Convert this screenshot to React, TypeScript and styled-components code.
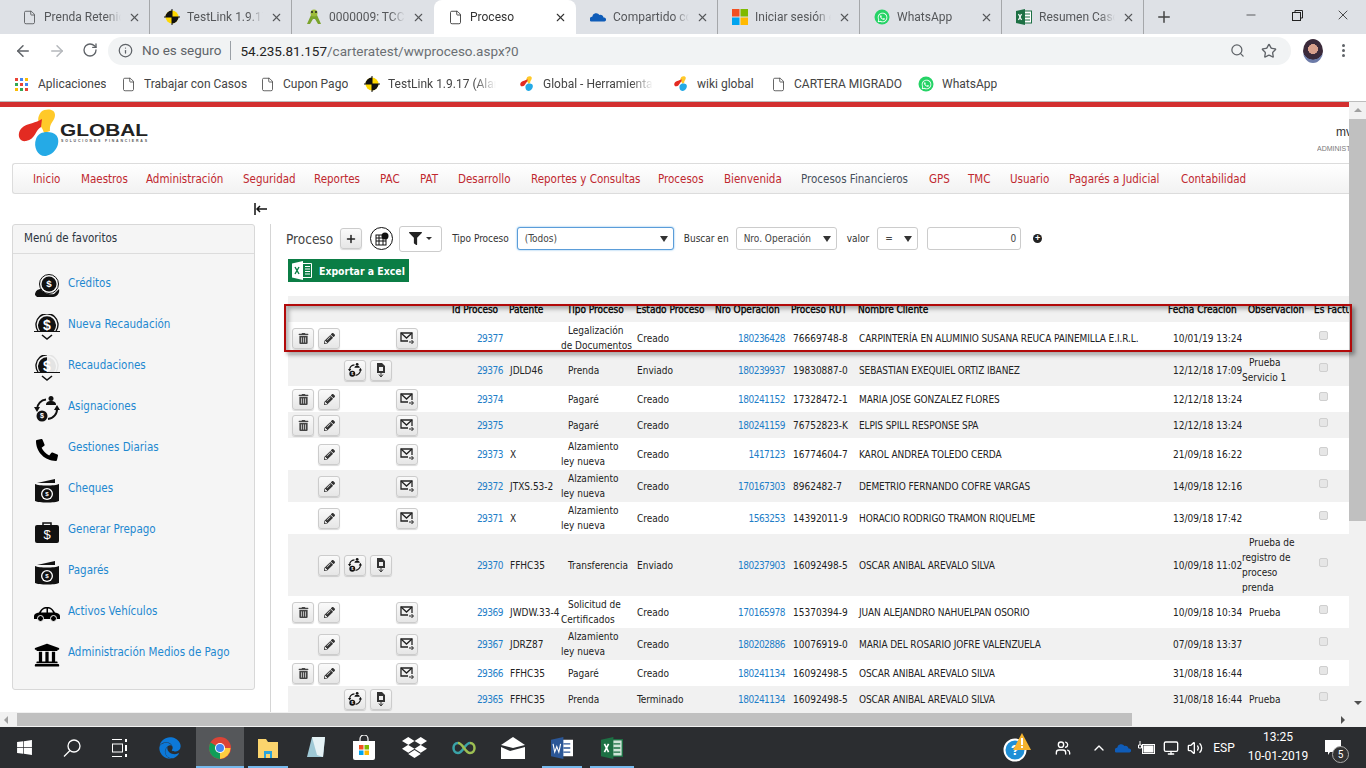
import React from 'react';
import styled, { createGlobalStyle } from 'styled-components';
import { FaWhatsapp, FaWindows, FaDropbox, FaEdge, FaPhoneAlt, FaUniversity, FaTrashAlt, FaPencilAlt, FaFilter } from 'react-icons/fa';
import { File, ArrowLeft, ArrowRight, RotateCw, Info, Search, Star, Plus, X, Minus, ChevronUp, Volume2, Monitor, Users } from 'lucide-react';

const GlobalStyle = createGlobalStyle`
  html, body { margin: 0; padding: 0; height: 100%; overflow: hidden; background: #fff; }
  * { box-sizing: border-box; }
`;

const chromeFont = 'Roboto, "Liberation Sans", sans-serif';
const pageFont = '"DejaVu Sans Condensed", "DejaVu Sans", sans-serif';

const Screen = styled.div`
  position: relative;
  width: 1366px;
  height: 768px;
  display: flex;
  flex-direction: column;
  overflow: hidden;
  font-family: ${pageFont};
`;

/* ---- browser chrome ---- */
const TabBar = styled.div`
  height: 34px;
  background: #dee1e6;
  display: flex;
  align-items: stretch;
  padding-left: 8px;
  font: 12px ${chromeFont};
  color: #45474a;
  flex: none;
`;

const Tab = styled.div<{ $active?: boolean; $sep?: boolean }>`
  width: 142px;
  display: flex;
  align-items: center;
  padding: 0 8px 0 14px;
  gap: 7px;
  background: ${(p) => (p.$active ? '#fff' : 'transparent')};
  border-radius: ${(p) => (p.$active ? '8px 8px 0 0' : '0')};
  color: ${(p) => (p.$active ? '#333' : '#55575a')};
  border-right: ${(p) => (p.$sep ? '1px solid #a5a7aa' : '1px solid transparent')};
`;

const TabTitle = styled.span`
  flex: 1;
  overflow: hidden;
  white-space: nowrap;
  mask-image: linear-gradient(90deg, #000 80%, transparent);
`;

const NewTab = styled.div`
  width: 40px;
  display: flex;
  align-items: center;
  justify-content: center;
  color: #444;
`;

const WindowButtons = styled.div`
  margin-left: auto;
  display: flex;
  align-items: flex-start;
  color: #222;
`;

const WindowButton = styled.div`
  width: 46px;
  height: 30px;
  display: flex;
  align-items: center;
  justify-content: center;
`;

const Toolbar = styled.div`
  height: 33px;
  background: #fff;
  display: flex;
  align-items: center;
  padding: 0 0 0 14px;
  flex: none;
  color: #5f6368;
`;

const NavArrows = styled.div`
  display: flex;
  gap: 16px;
  width: 94px;
`;

const Omnibox = styled.div`
  width: 1183px;
  height: 28px;
  background: #f1f3f4;
  border-radius: 14px;
  display: flex;
  align-items: center;
  padding: 0 10px;
  font: 13.5px ${chromeFont};
  color: #5f6368;
`;

const Insecure = styled.span`
  margin-left: 9px;
  padding-right: 9px;
  border-right: 1px solid #9aa0a6;
  line-height: 19px;
`;

const Url = styled.span`
  margin-left: 9px;
  color: #6b6f73;
  b { font-weight: 400; color: #222; }
`;

const OmniIcons = styled.div`
  margin-left: auto;
  display: flex;
  gap: 16px;
  margin-right: 4px;
`;

const Avatar = styled.div`
  width: 20px;
  height: 24px;
  border-radius: 50%;
  background: radial-gradient(circle at 50% 42%, #d9a08c 0 28%, #3b2a3a 30% 60%, #6c7ba8 62%);
  margin-left: 12px;
`;

const MenuDots = styled.div`
  margin-left: 19px;
  display: flex;
  flex-direction: column;
  gap: 2px;
`;

const MenuDot = styled.span`
  width: 3px;
  height: 3px;
  border-radius: 50%;
  background: #5f6368;
`;

const Bookmarks = styled.div`
  height: 35px;
  background: #fff;
  display: flex;
  align-items: center;
  padding-left: 15px;
  font: 12px ${chromeFont};
  color: #444;
  flex: none;
  border-bottom: 1px solid #bdbdbd;
`;

const Bookmark = styled.div<{ $w: number }>`
  width: ${(p) => p.$w}px;
  display: flex;
  align-items: center;
  gap: 8px;
  white-space: nowrap;
  overflow: hidden;
`;

const BookmarkTitle = styled.span<{ $max?: number }>`
  overflow: hidden;
  max-width: ${(p) => (p.$max ? `${p.$max}px` : 'none')};
  mask-image: ${(p) => (p.$max ? 'linear-gradient(90deg, #000 80%, transparent)' : 'none')};
`;

/* ---- page viewport ---- */
const Viewport = styled.div`
  flex: none;
  height: 625px;
  display: grid;
  grid-template-columns: 1349px 17px;
  grid-template-rows: 610px 15px;
`;

const Page = styled.div`
  overflow: hidden;
  background: #fff;
  border-top: 5px solid #d32f2f;
  display: flex;
  flex-direction: column;
  color: #222;
  font-size: 10.5px;
`;

const HeaderRow = styled.div`
  height: 56px;
  flex: none;
  display: flex;
  justify-content: space-between;
  padding-left: 18px;
`;

const UserBox = styled.div`
  width: 60px;
  padding-top: 18px;
  font-family: "Liberation Sans", sans-serif;
`;

const UserName = styled.div`
  font-size: 12px;
  color: #333;
  width: 13px;
  margin-left: auto;
  overflow: hidden;
  white-space: nowrap;
`;

const UserRole = styled.div`
  font-size: 7px;
  color: #7a7a7a;
  margin-top: 6px;
  width: 32px;
  margin-left: auto;
  overflow: hidden;
  white-space: nowrap;
`;

const MainNav = styled.nav`
  margin-left: 12px;
  height: 31px;
  flex: none;
  background: linear-gradient(#fff, #f2f2f2);
  border: 1px solid #dcdcdc;
  border-right: none;
  border-radius: 3px 0 0 3px;
  display: flex;
  align-items: center;
  padding-left: 20px;
  gap: 20px;
  white-space: nowrap;
`;

const NavLink = styled.a<{ $dark?: boolean; $w: number }>`
  width: ${(p) => p.$w}px;
  flex: none;
  color: ${(p) => (p.$dark ? '#46505c' : '#c0282f')};
  font-size: 11.5px;
`;

const Collapse = styled.div`
  height: 30px;
  flex: none;
  display: flex;
  align-items: center;
  padding-left: 254px;
  color: #111;
`;

const Body = styled.div`
  flex: 1;
  min-height: 0;
  display: flex;
  align-items: stretch;
`;

const SideColumn = styled.aside`
  width: 270px;
  flex: none;
  padding-left: 12px;
`;

const FavPanel = styled.section`
  width: 243px;
  height: 466px;
  background: #f5f5f5;
  border: 1px solid #d8d8d8;
  border-radius: 3px;
`;

const FavTitle = styled.div`
  height: 29px;
  line-height: 27px;
  padding-left: 11px;
  border-bottom: 1px solid #dcdcdc;
  font-size: 11.5px;
  color: #2b3440;
`;

const FavList = styled.div`
  padding-top: 15px;
  padding-left: 21px;
`;

const FavItem = styled.a`
  height: 41px;
  display: flex;
  gap: 8px;
  color: #1e88d0;
  font-size: 11.5px;
`;

const FavIcon = styled.div`
  width: 26px;
  height: 28px;
  flex: none;
  display: flex;
  align-items: center;
  justify-content: center;
  color: #000;
  margin-top: 3px;
`;

const FavLabel = styled.span`
  padding-top: 7px;
`;

const Content = styled.main`
  flex: 1;
  min-width: 0;
  border-left: 1px solid #d5d5d5;
  padding-left: 15px;
  overflow: hidden;
`;

const FilterBar = styled.div`
  height: 29px;
  display: flex;
  align-items: center;
  white-space: nowrap;
`;

const PageTitle = styled.h1`
  margin: 0 7px 0 0;
  font-size: 13.5px;
  font-weight: 400;
  color: #444;
`;

const RoundBtn = styled.div`
  width: 23px;
  height: 23px;
  margin-left: 8px;
  border: 1.5px solid #111;
  border-radius: 50%;
  display: flex;
  align-items: center;
  justify-content: center;
`;

const IconBtn = styled.div`
  width: 22px;
  height: 21px;
  background: linear-gradient(#fafafa, #e6e6e6);
  border: 1px solid #ccc;
  border-radius: 3px;
  box-shadow: 0 1px 1px rgba(0, 0, 0, 0.15);
  display: flex;
  align-items: center;
  justify-content: center;
  color: #222;
  flex: none;
`;

const FilterBtn = styled.div`
  width: 43px;
  height: 26px;
  margin-left: 6px;
  border: 1px solid #ccc;
  border-radius: 3px;
  background: #fff;
  display: flex;
  align-items: center;
  justify-content: center;
  gap: 4px;
`;

const Caret = styled.span`
  border-left: 3px solid transparent;
  border-right: 3px solid transparent;
  border-top: 3px solid #333;
`;

const FieldLabel = styled.span<{ $ml: number }>`
  margin-left: ${(p) => p.$ml}px;
  font-size: 10px;
  color: #333;
`;

const SelectBox = styled.div<{ $w: number; $ml: number; $focus?: boolean }>`
  width: ${(p) => p.$w}px;
  height: 23px;
  margin-left: ${(p) => p.$ml}px;
  border: 1px solid ${(p) => (p.$focus ? '#5b9dd9' : '#ccc')};
  box-shadow: ${(p) => (p.$focus ? '0 0 2px #66afe9' : 'none')};
  border-radius: 3px;
  background: #fff;
  display: flex;
  align-items: center;
  justify-content: space-between;
  padding: 0 5px 0 7px;
  font-size: 10px;
  color: #444;
`;

const SelectArrow = styled.span`
  border-left: 4px solid transparent;
  border-right: 4px solid transparent;
  border-top: 6px solid #333;
`;

const NumberBox = styled.div`
  width: 94px;
  height: 23px;
  margin-left: 9px;
  border: 1px solid #ccc;
  border-radius: 3px;
  text-align: right;
  padding-right: 4px;
  line-height: 21px;
  font-size: 10px;
  color: #444;
`;

const AddDot = styled.span`
  width: 9px;
  height: 9px;
  margin-left: 12px;
  border-radius: 50%;
  background: #222;
  color: #fff;
  font: bold 9px/9px "Liberation Sans", sans-serif;
  text-align: center;
`;

const ExcelBtn = styled.div`
  margin: 6px 0 0 2px;
  width: 121px;
  height: 23px;
  background: #0b7d45;
  color: #fff;
  display: flex;
  align-items: center;
  padding-left: 4px;
  gap: 7px;
  font-size: 10.4px;
  font-weight: 600;
`;

const GridWrap = styled.div`
  margin: 14px 0 0 2px;
  width: 1092px;
`;

const Table = styled.table`
  border-collapse: collapse;
  table-layout: fixed;
  width: 1092px;
  font-size: 10px;
  color: #222;
`;

const HeadCell = styled.th<{ $pl: number }>`
  height: 26px;
  padding: 8px 0 0 ${(p) => p.$pl}px;
  background: #f1f1f1;
  font-weight: 400;
  text-align: left;
  vertical-align: top;
  white-space: nowrap;
  overflow: hidden;
  color: #000;
  -webkit-text-stroke: 0.3px #000;
`;

const Row = styled.tr<{ $h: number; $even: boolean }>`
  height: ${(p) => p.$h}px;
  background: ${(p) => (p.$even ? '#f1f1f1' : '#fff')};
`;

const Cell = styled.td<{ $pl?: number; $pr?: number; $link?: boolean }>`
  padding: 0 ${(p) => p.$pr ?? 0}px 0 ${(p) => p.$pl ?? 0}px;
  vertical-align: middle;
  text-align: ${(p) => (p.$pr ? 'right' : 'left')};
  color: ${(p) => (p.$link ? '#1e7ec8' : '#222')};
  letter-spacing: ${(p) => (p.$link ? '-0.5px' : '0')};
  white-space: nowrap;
  overflow: hidden;
`;

const NameCell = styled(Cell)`
  letter-spacing: -0.1px;
`;

const WrapCell = styled(Cell)`
  white-space: normal;
  line-height: 15px;
  text-indent: 7px;
`;

const Actions = styled.div`
  display: grid;
  grid-template-columns: repeat(5, 22px);
  column-gap: 4px;
  padding-left: 4px;
`;

const CheckBox = styled.span`
  display: block;
  width: 9px;
  height: 9px;
  margin: -6px 0 0 9px;
  background: #e6e6e6;
  border: 1px solid #cfcfcf;
  border-radius: 2px;
`;

/* ---- scrollbars + taskbar ---- */
const VScroll = styled.div`
  background: #f1f1f1;
  display: flex;
  flex-direction: column;
  align-items: center;
`;

const VArrow = styled.span<{ $down?: boolean }>`
  width: 0;
  height: 0;
  margin: ${(p) => (p.$down ? 'auto 0 7px' : '6px 0 7px')};
  border-left: 4px solid transparent;
  border-right: 4px solid transparent;
  border-bottom: ${(p) => (p.$down ? 'none' : '4px solid #a0a0a0')};
  border-top: ${(p) => (p.$down ? '4px solid #505050' : 'none')};
`;

const VThumb = styled.div`
  width: 100%;
  height: 402px;
  background: #c0c0c0;
`;

const HScroll = styled.div`
  background: #f1f1f1;
  padding: 1px 4px;
  display: flex;
  align-items: center;
`;

const HArrow = styled.span<{ $right?: boolean }>`
  width: 0;
  height: 0;
  margin-left: ${(p) => (p.$right ? 'auto' : '0')};
  border-top: 4px solid transparent;
  border-bottom: 4px solid transparent;
  border-right: ${(p) => (p.$right ? 'none' : '4px solid #a0a0a0')};
  border-left: ${(p) => (p.$right ? '4px solid #505050' : 'none')};
`;

const HThumb = styled.div`
  margin-left: 9px;
  width: 1115px;
  height: 13px;
  background: #c0c0c0;
`;

const Corner = styled.div`
  background: #f1f1f1;
`;

const Taskbar = styled.div`
  height: 41px;
  background: #2b2d30;
  flex: none;
  display: flex;
  align-items: stretch;
  color: #fff;
  font: 12px ${chromeFont};
`;

const TaskItem = styled.div<{ $w?: number; $active?: boolean; $open?: boolean }>`
  position: relative;
  width: ${(p) => p.$w ?? 48}px;
  display: flex;
  align-items: center;
  justify-content: center;
  background: ${(p) => (p.$active ? '#55575a' : 'transparent')};

  &::after {
    content: '';
    display: ${(p) => (p.$open || p.$active ? 'block' : 'none')};
    position: absolute;
    left: ${(p) => (p.$active ? 0 : 4)}px;
    right: ${(p) => (p.$active ? 0 : 4)}px;
    bottom: 0;
    height: 2px;
    background: #76b9ed;
  }
`;

const Tray = styled.div`
  margin-left: auto;
  display: flex;
  align-items: stretch;
`;

const TrayCell = styled.div<{ $w: number }>`
  width: ${(p) => p.$w}px;
  display: flex;
  align-items: center;
  justify-content: center;

  svg { flex: none; }
`;

const Clock = styled.div`
  width: 62px;
  text-align: center;
  line-height: 19px;
  padding-top: 1px;
  font-size: 12px;
`;

const Notif = styled.div`
  width: 57px;
  position: relative;
  display: flex;
  align-items: center;
  padding-left: 16px;
`;

const NotifBadge = styled.span`
  position: absolute;
  right: 17px;
  bottom: 5px;
  width: 17px;
  height: 17px;
  border-radius: 50%;
  background: #333;
  border: 1px solid #aaa;
  font-size: 10px;
  line-height: 15px;
  text-align: center;
`;

const Highlight = styled.div`
  position: absolute;
  left: 284px;
  top: 304px;
  width: 1068px;
  height: 48px;
  border: 2px solid #b20a0a;
  box-shadow: 3px 3px 4px rgba(0, 0, 0, 0.35), inset 3px 3px 4px rgba(0, 0, 0, 0.3);
  pointer-events: none;
`;

/* ---- drawn icons ---- */
const TestLinkIcon = () => (
  <svg width="16" height="16" viewBox="0 0 16 16">
    <circle cx="8" cy="8" r="6.5" fill="#ffd800" />
    <path d="M8 1.5V8H1.5A6.500 6.500 0 0 1 8 1.500zM8 14.500V8h6.500A6.500 6.500 0 0 1 8 14.500z" fill="#111" />
    <path d="M8 0v16M0 8h16" stroke="#111" strokeWidth="1" />
  </svg>
);

const MantisIcon = () => (
  <svg width="16" height="16" viewBox="0 0 16 16">
    <path d="M1 15 5 6h6l4 9h-3L9 10H7l-3 5z" fill="#7aa32c" />
    <circle cx="8" cy="4" r="3.500" fill="#9dbb3a" />
    <circle cx="6" cy="3" r="1" fill="#222" />
    <circle cx="10" cy="3" r="1" fill="#222" />
  </svg>
);

const CloudIcon = ({ size = 16 }: { size?: number }) => (
  <svg width={size} height={size} viewBox="0 0 16 16">
    <path d="M1 12.500a2.500 2.500 0 0 1 1.200-4.700A4 4 0 0 1 9.500 6a3 3 0 0 1 4 2.500 2 2 0 0 1 1 4z" fill="#0f5cb8" />
  </svg>
);

const MsIcon = () => (
  <svg width="16" height="16" viewBox="0 0 16 16">
    <rect width="7.500" height="7.500" fill="#f25022" />
    <rect x="8.500" width="7.500" height="7.500" fill="#7fba00" />
    <rect y="8.500" width="7.500" height="7.500" fill="#00a4ef" />
    <rect x="8.500" y="8.500" width="7.500" height="7.500" fill="#ffb900" />
  </svg>
);

const WaIcon = () => (
  <svg width="16" height="16" viewBox="0 0 16 16">
    <circle cx="8" cy="8" r="7.500" fill="#25d366" />
    <foreignObject x="2.500" y="2.500" width="11" height="11">
      <FaWhatsapp size={11} color="#fff" />
    </foreignObject>
  </svg>
);

const ExcelIcon = ({ size = 16, paper = '#fff' }: { size?: number; paper?: string }) => (
  <svg width={size} height={size} viewBox="0 0 16 16">
    <rect x="7" y="2" width="8.500" height="12" fill={paper} stroke="#1d7044" />
    <path d="M9 5h5M9 8h5M9 11h5" stroke="#1d7044" />
    <path d="M0 2 9 0v16L0 14z" fill="#1d7044" />
    <path d="m2.500 5 3 6M5.500 5l-3 6" stroke="#fff" strokeWidth="1.200" />
  </svg>
);

const ExportIcon = () => (
  <svg width="20" height="19" viewBox="0 0 20 19">
    <path d="M0 2.500 11 0v19L0 16.500z" fill="#fff" />
    <path d="m3 6 4 7M7 6l-4 7" stroke="#0b7d45" strokeWidth="1.400" />
    <path d="M11 2.500h8.500v14H11M13 5.500h5M13 8h5M13 10.500h5M13 13h5" fill="none" stroke="#fff" />
  </svg>
);

const WordIcon = () => (
  <svg width="22" height="22" viewBox="0 0 16 16">
    <rect x="7" y="2" width="9" height="12" fill="#fff" />
    <path d="M9 5h5M9 8h5M9 11h5" stroke="#2b5797" />
    <path d="M0 2 9 0v16L0 14z" fill="#2b5797" />
    <path d="m1.500 5 1.200 6 1.500-4 1.500 4L7 5" fill="none" stroke="#fff" strokeWidth=".8" />
  </svg>
);

const AppsIcon = () => (
  <svg width="15" height="13" viewBox="0 0 15 13">
    {['#ea4335', '#4285f4', '#fbbc05', '#34a853', '#ea4335', '#4285f4', '#fbbc05', '#34a853', '#ea4335'].map((c, i) => (
      <rect key={i} x={(i % 3) * 5} y={Math.floor(i / 3) * 5} width="3" height="3" fill={c} />
    ))}
  </svg>
);

const GlobalMark = ({ size = 16 }: { size?: number }) => (
  <svg width={size} height={size} viewBox="0 0 44 50">
    <path d="M23 3c5-4 14-3 14 3 0 6-6 8-5 16l-6 2c-2-8-10-11-3-21z" fill="#ffc929" />
    <path d="M1 24c3-10 13-8 23-14l-1 8c-6 3-5 12-15 14-5 1-8-3-7-8z" fill="#e32b22" />
    <path d="M18 30c3-9 16-8 20-4 5 5 2 18-10 21-8 1-13-9-10-17z" fill="#25aae6" />
  </svg>
);

const GlobalLogo = () => (
  <svg width="134" height="56" viewBox="0 0 134 56">
    <g transform="translate(-3 2)"><GlobalMark size={50} /></g>
    <text x="42" y="29" fontFamily="Liberation Sans, sans-serif" fontSize="16" fontWeight="700" fill="#222" textLength="88" lengthAdjust="spacingAndGlyphs">GLOBAL</text>
    <text x="43" y="35" fontFamily="Liberation Sans, sans-serif" fontSize="3.500" fontWeight="700" fill="#555" textLength="86">SOLUCIONES FINANCIERAS</text>
  </svg>
);

const Coin = ({ cx, cy, r }: { cx: number; cy: number; r: number }) => (
  <g>
    <circle cx={cx} cy={cy} r={r} fill="#111" />
    <text x={cx} y={cy + r * 0.45} textAnchor="middle" fontFamily="Liberation Sans, sans-serif" fontWeight="700" fontSize={r * 1.3} fill="#fff">$</text>
  </g>
);

const HandCoinIcon = () => (
  <svg width="26" height="24" viewBox="0 0 26 24">
    <circle cx="15" cy="10" r="9.500" fill="none" stroke="#111" />
    <Coin cx={15} cy={10} r={7.5} />
    <path d="M1 21c0-4 3-6 6-6 2 4 8 6 13 5l5-5c1 4-2 8-6 8H3z" fill="#111" />
  </svg>
);

const DomeIcon = ({ half }: { half?: boolean }) => (
  <svg width="26" height="27" viewBox="0 0 26 27">
    <defs>
      <linearGradient id="halfDome">
        <stop offset=".5" stopColor="#111" />
        <stop offset=".5" stopColor="#e4e4e4" />
      </linearGradient>
    </defs>
    <path d="M4 17A11 11 0 1 1 22 17" fill="none" stroke={half ? 'url(#halfDome)' : '#111'} strokeWidth="1.400" />
    <path d="M6 17A9 9 0 1 1 20 17z" fill={half ? 'url(#halfDome)' : '#111'} />
    <text x="13" y="16" textAnchor="middle" fontFamily="Liberation Sans, sans-serif" fontWeight="700" fontSize="14" fill="#fff">$</text>
    <path d="M0 17.500h26" stroke="#111" />
    <path d="m8 21 5 4 5-4" fill="none" stroke="#111" strokeWidth="1.600" />
  </svg>
);

const CycleIcon = ({ size = 26 }: { size?: number }) => (
  <svg width={size} height={size} viewBox="0 0 26 26">
    <path d="M3 13A10 10 0 0 1 12 3.500M23 12a10 10 0 0 1-9 11" fill="none" stroke="#111" strokeWidth="2" />
    <path d="m0 11 6 0-3 5zM20 14l6 0-3-5z" fill="#111" />
    <circle cx="17" cy="2.500" r="2.500" fill="#111" />
    <path d="M12 9c0-3 2-4 5-4s5 1 5 4z" fill="#111" />
    <Coin cx={8} cy={20} r={5.5} />
  </svg>
);

const WalletIcon = () => (
  <svg width="26" height="25" viewBox="0 0 26 25">
    <path d="M3 4 21 0v4z" fill="#111" />
    <path d="M1 5c4 2 20 2 24 0v17c-4 2-20 2-24 0z" fill="#111" />
    <circle cx="13" cy="15" r="6" fill="#fff" />
    <Coin cx={13} cy={15} r={4.7} />
  </svg>
);

const BriefcaseIcon = () => (
  <svg width="24" height="21" viewBox="0 0 24 21">
    <path d="M8 4V1h8v3" fill="none" stroke="#111" strokeWidth="1.500" />
    <rect y="3" width="24" height="18" rx="2" fill="#111" />
    <text x="12" y="17" textAnchor="middle" fontFamily="Liberation Sans, sans-serif" fontSize="13" fill="#fff">$</text>
  </svg>
);

const CarIcon = () => (
  <svg width="26" height="15" viewBox="0 0 26 15">
    <path d="M0 9c0-2 2-3 5-3.500C7 2 9 0 13 0s6 2 8 5.500c3 .5 5 1.500 5 3.500v3H0z" fill="#000" />
    <path d="M7 5.500C8 3 10 1.500 12.500 1.500v4zM14 1.500c2 0 4 1.500 5 4h-5z" fill="#f5f5f5" />
    <circle cx="6.500" cy="11.500" r="3" fill="#000" stroke="#f5f5f5" />
    <circle cx="19.500" cy="11.500" r="3" fill="#000" stroke="#f5f5f5" />
  </svg>
);

const MailFwd = () => (
  <svg width="14" height="12" viewBox="0 0 14 12">
    <path d="M8 9H1V1h11v6" fill="none" stroke="#222" strokeWidth="1.300" />
    <path d="m1 1 5.500 5L12 1" fill="none" stroke="#222" strokeWidth="1.300" />
    <path d="M9 10h4M11.500 8l2 2-2 2" fill="none" stroke="#222" />
  </svg>
);

const DocDown = () => (
  <svg width="10" height="14" viewBox="0 0 10 14">
    <path d="M1 0h5l3 3v7H1z" fill="#333" />
    <rect x="3" y="4" width="4" height="4" fill="#eee" />
    <path d="M5 10v3M3 11.500 5 14l2-2.500" stroke="#333" fill="none" />
  </svg>
);

const RestoreIcon = () => (
  <svg width="11" height="11" viewBox="0 0 11 11" fill="none" stroke="#222">
    <rect x=".5" y="2.500" width="8" height="8" />
    <path d="M3 2.500V.5h7.500V8H8.500" />
  </svg>
);

const ChromeIcon = () => (
  <svg width="22" height="22" viewBox="0 0 22 22">
    <circle cx="11" cy="11" r="11" fill="#db4437" />
    <path d="M11 11 1.500 5.500A11 11 0 0 0 11 22z" fill="#0f9d58" />
    <path d="M11 11h10.500A11 11 0 0 1 11 22z" fill="#ffcd40" />
    <circle cx="11" cy="11" r="5" fill="#fff" />
    <circle cx="11" cy="11" r="4" fill="#4285f4" />
  </svg>
);

const FolderIcon = () => (
  <svg width="22" height="22" viewBox="0 0 22 22">
    <path d="M1 2h8l2 3h10v16H1z" fill="#fbd46d" />
    <rect x="7" y="14" width="8" height="7" fill="#2aa3dc" />
    <rect x="9" y="17" width="4" height="4" fill="#fbd46d" />
  </svg>
);

const NoteIcon = () => (
  <svg width="22" height="24" viewBox="0 0 22 24">
    <path d="M7 1h13l-2 20H2z" fill="#9fc9d6" />
    <path d="M7 1h13l-2 20-6-2z" fill="#e6f2f5" />
  </svg>
);

const StoreIcon = () => (
  <svg width="22" height="25" viewBox="0 0 22 25">
    <path d="M7 7V4a4 4 0 0 1 8 0v3" fill="none" stroke="#fff" strokeWidth="1.200" />
    <path d="M0 6h22v17a2 2 0 0 1-2 2H2a2 2 0 0 1-2-2z" fill="#fff" />
    <rect x="6" y="10" width="4.500" height="4.500" fill="#f25022" />
    <rect x="11.500" y="10" width="4.500" height="4.500" fill="#7fba00" />
    <rect x="6" y="15.500" width="4.500" height="4.500" fill="#00a4ef" />
    <rect x="11.500" y="15.500" width="4.500" height="4.500" fill="#ffb900" />
  </svg>
);

const InfinityIcon = () => (
  <svg width="26" height="16" viewBox="0 0 26 16">
    <path d="M7 3c-6 0-6 10 0 10 5 0 7-10 12-10" fill="none" stroke="#3aa3a8" strokeWidth="2.500" />
    <path d="M7 3c5 0 7 10 12 10 6 0 6-10 0-10" fill="none" stroke="#9dbf53" strokeWidth="2.500" />
  </svg>
);

const EnvelopeIcon = () => (
  <svg width="24" height="24" viewBox="0 0 24 24">
    <path d="M0 9 12 1l12 8-12 3z" fill="#fff" />
    <path d="M0 11v12h24V11L9 15z" fill="#fff" />
  </svg>
);

const TaskViewIcon = () => (
  <svg width="18" height="20" viewBox="0 0 18 20" fill="none" stroke="#fff">
    <path d="M1 1.500h10M1 18.500h10" />
    <rect x="1.500" y="6" width="10" height="8" />
    <path d="M15 1v3M15 7v6M15 16v3" strokeWidth="2" />
  </svg>
);

const SearchGlass = () => (
  <svg width="18" height="18" viewBox="0 0 18 18" fill="none" stroke="#fff" strokeWidth="1.300">
    <circle cx="11" cy="7" r="6" />
    <path d="m7 11.500-6 6" />
  </svg>
);

const HelpIcon = () => (
  <svg width="30" height="30" viewBox="0 0 30 30">
    <circle cx="12" cy="17" r="10.500" fill="#1f8fd6" stroke="#fff" strokeWidth="2" />
    <text x="12" y="22" textAnchor="middle" fontFamily="Liberation Sans, sans-serif" fontWeight="700" fontSize="14" fill="#fff">?</text>
    <path d="M19 0 28 17H10z" fill="#f5b32e" />
    <rect x="18" y="5" width="2" height="7" fill="#fff" />
    <rect x="18" y="13" width="2" height="2" fill="#fff" />
  </svg>
);

const PowerIcon = () => (
  <svg width="18" height="16" viewBox="0 0 18 16" fill="none" stroke="#fff">
    <rect x="4.500" y="4.500" width="12" height="9" />
    <rect x="6" y="6" width="9" height="6" fill="#fff" />
    <path d="M2 1v4M0.500 5h3v3h-3z" />
  </svg>
);

/* ---- data ---- */
const tabs: { title: string; icon: React.ReactNode; active?: boolean; sep?: boolean }[] = [
  { title: 'Prenda Retenic', icon: <File size={15} strokeWidth={1.4} />, sep: true },
  { title: 'TestLink 1.9.17', icon: <TestLinkIcon />, sep: true },
  { title: '0000009: TCC-1', icon: <MantisIcon /> },
  { title: 'Proceso', icon: <File size={15} strokeWidth={1.4} />, active: true },
  { title: 'Compartido co', icon: <CloudIcon />, sep: true },
  { title: 'Iniciar sesión e', icon: <MsIcon />, sep: true },
  { title: 'WhatsApp', icon: <WaIcon />, sep: true },
  { title: 'Resumen Caso', icon: <ExcelIcon />, sep: true },
];

const bookmarks: { title: string; icon: React.ReactNode; w: number; max?: number }[] = [
  { title: 'Aplicaciones', icon: <AppsIcon />, w: 106 },
  { title: 'Trabajar con Casos', icon: <File size={15} strokeWidth={1.3} />, w: 139 },
  { title: 'Cupon Pago', icon: <File size={15} strokeWidth={1.3} />, w: 104 },
  { title: 'TestLink 1.9.17 (Alan', icon: <TestLinkIcon />, w: 155, max: 108 },
  { title: 'Global - Herramienta', icon: <GlobalMark />, w: 154, max: 112 },
  { title: 'wiki global', icon: <GlobalMark />, w: 98 },
  { title: 'CARTERA MIGRADO', icon: <File size={15} strokeWidth={1.3} />, w: 147 },
  { title: 'WhatsApp', icon: <WaIcon />, w: 100 },
];

const navItems: { label: string; w: number; dark?: boolean }[] = [
  { label: 'Inicio', w: 28 },
  { label: 'Maestros', w: 45 },
  { label: 'Administración', w: 77 },
  { label: 'Seguridad', w: 51 },
  { label: 'Reportes', w: 46 },
  { label: 'PAC', w: 20 },
  { label: 'PAT', w: 18 },
  { label: 'Desarrollo', w: 53 },
  { label: 'Reportes y Consultas', w: 107 },
  { label: 'Procesos', w: 46 },
  { label: 'Bienvenida', w: 57 },
  { label: 'Procesos Financieros', w: 108, dark: true },
  { label: 'GPS', w: 19 },
  { label: 'TMC', w: 22 },
  { label: 'Usuario', w: 39 },
  { label: 'Pagarés a Judicial', w: 92 },
  { label: 'Contabilidad', w: 66 },
];

const favorites: { label: string; icon: React.ReactNode }[] = [
  { label: 'Créditos', icon: <HandCoinIcon /> },
  { label: 'Nueva Recaudación', icon: <DomeIcon /> },
  { label: 'Recaudaciones', icon: <DomeIcon half /> },
  { label: 'Asignaciones', icon: <CycleIcon /> },
  { label: 'Gestiones Diarias', icon: <FaPhoneAlt size={22} /> },
  { label: 'Cheques', icon: <WalletIcon /> },
  { label: 'Generar Prepago', icon: <BriefcaseIcon /> },
  { label: 'Pagarés', icon: <WalletIcon /> },
  { label: 'Activos Vehículos', icon: <CarIcon /> },
  { label: 'Administración Medios de Pago', icon: <FaUniversity size={26} /> },
];

const columns: { title: string; w: number; pl: number }[] = [
  { title: '', w: 160, pl: 0 },
  { title: 'Id Proceso', w: 58, pl: 4 },
  { title: 'Patente', w: 55, pl: 3 },
  { title: 'Tipo Proceso', w: 72, pl: 6 },
  { title: 'Estado Proceso', w: 79, pl: 3 },
  { title: 'Nro Operación', w: 77, pl: 3 },
  { title: 'Proceso RUT', w: 66, pl: 2 },
  { title: 'Nombre Cliente', w: 310, pl: 3 },
  { title: 'Fecha Creación', w: 77, pl: 3 },
  { title: 'Observación', w: 68, pl: 6 },
  { title: 'Es Factura', w: 70, pl: 4 },
];

type Proceso = {
  id: string;
  patente: string;
  tipo: string;
  estado: string;
  op: string;
  rut: string;
  cliente: string;
  fecha: string;
  obs?: string;
  h: number;
  actions: ('del' | 'edit' | 'cycle' | 'doc' | 'mail')[];
};

const full: Proceso['actions'] = ['del', 'edit', 'mail'];
const editMail: Proceso['actions'] = ['edit', 'mail'];

const rows: Proceso[] = [
  { id: '29377', patente: '', tipo: 'Legalización de Documentos', estado: 'Creado', op: '180236428', rut: '76669748-8', cliente: 'CARPINTERÍA EN ALUMINIO SUSANA REUCA PAINEMILLA E.I.R.L.', fecha: '10/01/19 13:24', h: 32, actions: full },
  { id: '29376', patente: 'JDLD46', tipo: 'Prenda', estado: 'Enviado', op: '180239937', rut: '19830887-0', cliente: 'SEBASTIAN EXEQUIEL ORTIZ IBANEZ', fecha: '12/12/18 17:09', obs: 'Prueba Servicio 1', h: 32, actions: ['cycle', 'doc'] },
  { id: '29374', patente: '', tipo: 'Pagaré', estado: 'Creado', op: '180241152', rut: '17328472-1', cliente: 'MARIA JOSE GONZALEZ FLORES', fecha: '12/12/18 13:24', h: 26, actions: full },
  { id: '29375', patente: '', tipo: 'Pagaré', estado: 'Creado', op: '180241159', rut: '76752823-K', cliente: 'ELPIS SPILL RESPONSE SPA', fecha: '12/12/18 13:24', h: 26, actions: full },
  { id: '29373', patente: 'X', tipo: 'Alzamiento ley nueva', estado: 'Creado', op: '1417123', rut: '16774604-7', cliente: 'KAROL ANDREA TOLEDO CERDA', fecha: '21/09/18 16:22', h: 32, actions: editMail },
  { id: '29372', patente: 'JTXS.53-2', tipo: 'Alzamiento ley nueva', estado: 'Creado', op: '170167303', rut: '8962482-7', cliente: 'DEMETRIO FERNANDO COFRE VARGAS', fecha: '14/09/18 12:16', h: 32, actions: editMail },
  { id: '29371', patente: 'X', tipo: 'Alzamiento ley nueva', estado: 'Creado', op: '1563253', rut: '14392011-9', cliente: 'HORACIO RODRIGO TRAMON RIQUELME', fecha: '13/09/18 17:42', h: 32, actions: editMail },
  { id: '29370', patente: 'FFHC35', tipo: 'Transferencia', estado: 'Enviado', op: '180237903', rut: '16092498-5', cliente: 'OSCAR ANIBAL AREVALO SILVA', fecha: '10/09/18 11:02', obs: 'Prueba de registro de proceso prenda', h: 62, actions: ['edit', 'cycle', 'doc'] },
  { id: '29369', patente: 'JWDW.33-4', tipo: 'Solicitud de Certificados', estado: 'Creado', op: '170165978', rut: '15370394-9', cliente: 'JUAN ALEJANDRO NAHUELPAN OSORIO', fecha: '10/09/18 10:34', obs: 'Prueba', h: 32, actions: full },
  { id: '29367', patente: 'JDRZ87', tipo: 'Alzamiento ley nueva', estado: 'Creado', op: '180202886', rut: '10076919-0', cliente: 'MARIA DEL ROSARIO JOFRE VALENZUELA', fecha: '07/09/18 13:37', h: 32, actions: editMail },
  { id: '29366', patente: 'FFHC35', tipo: 'Pagaré', estado: 'Creado', op: '180241134', rut: '16092498-5', cliente: 'OSCAR ANIBAL AREVALO SILVA', fecha: '31/08/18 16:44', h: 26, actions: full },
  { id: '29365', patente: 'FFHC35', tipo: 'Prenda', estado: 'Terminado', op: '180241134', rut: '16092498-5', cliente: 'OSCAR ANIBAL AREVALO SILVA', fecha: '31/08/18 16:44', obs: 'Prueba', h: 26, actions: ['cycle', 'doc'] },
];

const actionIcon = {
  del: <FaTrashAlt size={11} color="#444" />,
  edit: <FaPencilAlt size={11} color="#333" />,
  cycle: <CycleIcon size={14} />,
  doc: <DocDown />,
  mail: <MailFwd />,
};

const slots: Proceso['actions'] = ['del', 'edit', 'cycle', 'doc', 'mail'];

const App = () => (
  <Screen>
    <GlobalStyle />
    <TabBar>
      {tabs.map((t) => (
        <Tab key={t.title} $active={t.active} $sep={t.sep}>
          {t.icon}
          <TabTitle>{t.title}</TabTitle>
          <X size={13} strokeWidth={2} />
        </Tab>
      ))}
      <NewTab><Plus size={18} /></NewTab>
      <WindowButtons>
        <WindowButton><Minus size={14} strokeWidth={1.2} /></WindowButton>
        <WindowButton><RestoreIcon /></WindowButton>
        <WindowButton><X size={16} strokeWidth={1.2} /></WindowButton>
      </WindowButtons>
    </TabBar>
    <Toolbar>
      <NavArrows>
        <ArrowLeft size={18} />
        <ArrowRight size={18} color="#b5b8bc" />
        <RotateCw size={16} />
      </NavArrows>
      <Omnibox>
        <Info size={15} />
        <Insecure>No es seguro</Insecure>
        <Url><b>54.235.81.157</b>/carteratest/wwproceso.aspx?0</Url>
        <OmniIcons>
          <Search size={15} />
          <Star size={16} />
        </OmniIcons>
      </Omnibox>
      <Avatar />
      <MenuDots><MenuDot /><MenuDot /><MenuDot /></MenuDots>
    </Toolbar>
    <Bookmarks>
      {bookmarks.map((b) => (
        <Bookmark key={b.title} $w={b.w}>
          {b.icon}
          <BookmarkTitle $max={b.max}>{b.title}</BookmarkTitle>
        </Bookmark>
      ))}
    </Bookmarks>
    <Viewport>
      <Page>
        <HeaderRow>
          <GlobalLogo />
          <UserBox>
            <UserName>mvillar</UserName>
            <UserRole>ADMINISTRADOR</UserRole>
          </UserBox>
        </HeaderRow>
        <MainNav>
          {navItems.map((n) => (
            <NavLink key={n.label} $w={n.w} $dark={n.dark}>{n.label}</NavLink>
          ))}
        </MainNav>
        <Collapse>
          <svg width="14" height="12" viewBox="0 0 14 12">
            <path d="M1 0v12M13 6H3M6 3 3 6l3 3" fill="none" stroke="#111" strokeWidth="1.500" />
          </svg>
        </Collapse>
        <Body>
          <SideColumn>
            <FavPanel>
              <FavTitle>Menú de favoritos</FavTitle>
              <FavList>
                {favorites.map((f) => (
                  <FavItem key={f.label}>
                    <FavIcon>{f.icon}</FavIcon>
                    <FavLabel>{f.label}</FavLabel>
                  </FavItem>
                ))}
              </FavList>
            </FavPanel>
          </SideColumn>
          <Content>
            <FilterBar>
              <PageTitle>Proceso</PageTitle>
              <IconBtn><Plus size={12} strokeWidth={3} /></IconBtn>
              <RoundBtn>
                <svg width="14" height="14" viewBox="0 0 14 14">
                  <rect x="1" y="3" width="10" height="10" fill="none" stroke="#111" />
                  <path d="M1 6h10M1 9h10M4 3v10M8 3v10" stroke="#111" />
                  <circle cx="10" cy="4" r="3.500" fill="#111" />
                </svg>
              </RoundBtn>
              <FilterBtn><FaFilter size={13} color="#222" /><Caret /></FilterBtn>
              <FieldLabel $ml={10}>Tipo Proceso</FieldLabel>
              <SelectBox $w={157} $ml={8} $focus>(Todos)<SelectArrow /></SelectBox>
              <FieldLabel $ml={10}>Buscar en</FieldLabel>
              <SelectBox $w={101} $ml={7}>Nro. Operación<SelectArrow /></SelectBox>
              <FieldLabel $ml={10}>valor</FieldLabel>
              <SelectBox $w={41} $ml={8}>=<SelectArrow /></SelectBox>
              <NumberBox>0</NumberBox>
              <AddDot>+</AddDot>
            </FilterBar>
            <ExcelBtn>
              <ExportIcon />
              Exportar a Excel
            </ExcelBtn>
            <GridWrap>
              <Table>
                <colgroup>
                  {columns.map((c) => (
                    <col key={c.title} width={c.w} />
                  ))}
                </colgroup>
                <thead>
                  <tr>
                    {columns.map((c) => (
                      <HeadCell key={c.title} $pl={c.pl}>{c.title}</HeadCell>
                    ))}
                  </tr>
                </thead>
                <tbody>
                  {rows.map((r, i) => (
                    <Row key={r.id} $h={r.h} $even={i % 2 === 1}>
                      <Cell>
                        <Actions>
                          {slots.map((s) =>
                            r.actions.includes(s) ? <IconBtn key={s}>{actionIcon[s]}</IconBtn> : <span key={s} />
                          )}
                        </Actions>
                      </Cell>
                      <Cell $link $pr={3}>{r.id}</Cell>
                      <Cell $pl={4}>{r.patente}</Cell>
                      <WrapCell>{r.tipo}</WrapCell>
                      <Cell $pl={4}>{r.estado}</Cell>
                      <Cell $link $pr={4}>{r.op}</Cell>
                      <Cell $pl={4}>{r.rut}</Cell>
                      <NameCell $pl={4}>{r.cliente}</NameCell>
                      <Cell $pl={8}>{r.fecha}</Cell>
                      <WrapCell>{r.obs}</WrapCell>
                      <Cell><CheckBox /></Cell>
                    </Row>
                  ))}
                </tbody>
              </Table>
            </GridWrap>
          </Content>
        </Body>
      </Page>
      <VScroll>
        <VArrow />
        <VThumb />
        <VArrow $down />
      </VScroll>
      <HScroll>
        <HArrow />
        <HThumb />
        <HArrow $right />
      </HScroll>
      <Corner />
    </Viewport>
    <Taskbar>
      <TaskItem><FaWindows size={17} /></TaskItem>
      <TaskItem><SearchGlass /></TaskItem>
      <TaskItem><TaskViewIcon /></TaskItem>
      <TaskItem $w={52}><FaEdge size={22} color="#0c78d8" /></TaskItem>
      <TaskItem $active><ChromeIcon /></TaskItem>
      <TaskItem $open><FolderIcon /></TaskItem>
      <TaskItem><NoteIcon /></TaskItem>
      <TaskItem><StoreIcon /></TaskItem>
      <TaskItem $w={52}><FaDropbox size={25} /></TaskItem>
      <TaskItem><InfinityIcon /></TaskItem>
      <TaskItem $w={50}><EnvelopeIcon /></TaskItem>
      <TaskItem $open><WordIcon /></TaskItem>
      <TaskItem $w={52} $open><ExcelIcon size={22} paper="#cfe5d8" /></TaskItem>
      <Tray>
        <TrayCell $w={30}><HelpIcon /></TrayCell>
        <TrayCell $w={60}><Users size={16} /></TrayCell>
        <TrayCell $w={12}><ChevronUp size={16} /></TrayCell>
        <TrayCell $w={36}><CloudIcon /></TrayCell>
        <TrayCell $w={12}><PowerIcon /></TrayCell>
        <TrayCell $w={36}><Monitor size={16} /></TrayCell>
        <TrayCell $w={12}><Volume2 size={16} /></TrayCell>
        <TrayCell $w={46}>ESP</TrayCell>
        <Clock>13:25<br />10-01-2019</Clock>
        <Notif>
          <svg width="16" height="15" viewBox="0 0 16 15"><path d="M0 0h16v12H5l-2 3v-3H0z" fill="#fff" /></svg>
          <NotifBadge>5</NotifBadge>
        </Notif>
      </Tray>
    </Taskbar>
    <Highlight />
  </Screen>
);

export default App;
